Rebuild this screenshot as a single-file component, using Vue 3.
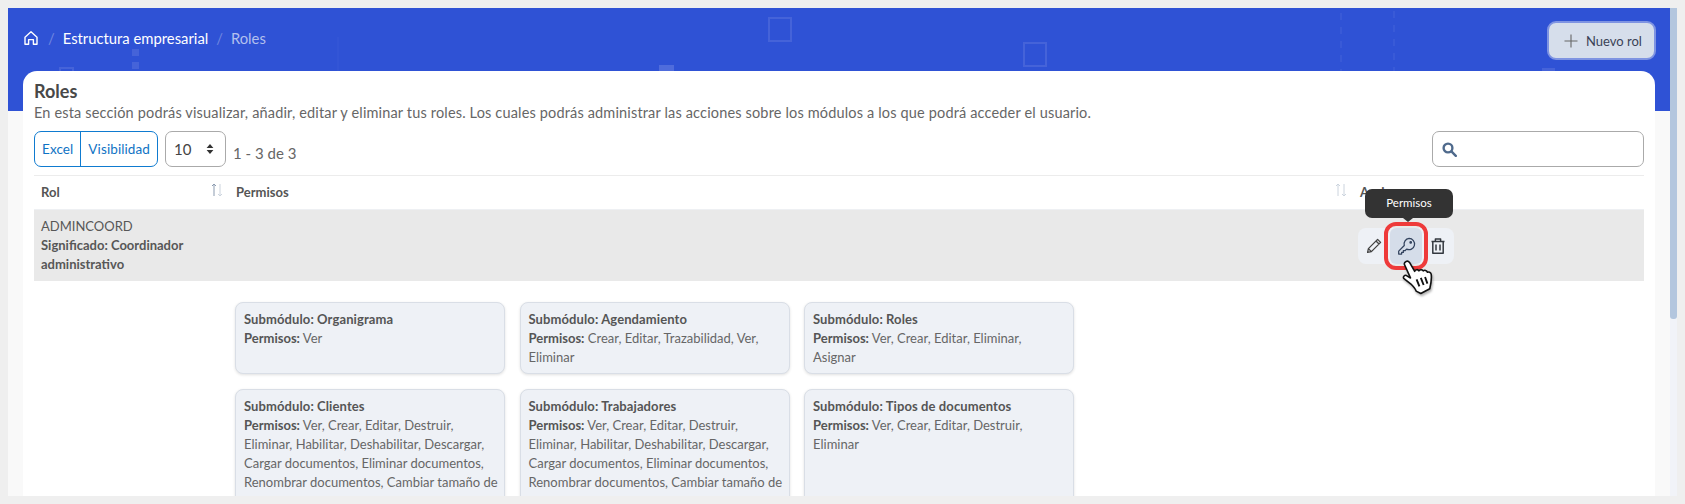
<script setup>
const long = 'Ver, Crear, Editar, Destruir, Eliminar, Habilitar, Deshabilitar, Descargar, Cargar documentos, Eliminar documentos, Renombrar documentos, Cambiar tamaño de'
const modules = [
  { name: 'Organigrama', perms: 'Ver' },
  { name: 'Agendamiento', perms: 'Crear, Editar, Trazabilidad, Ver, Eliminar' },
  { name: 'Roles', perms: 'Ver, Crear, Editar, Eliminar, Asignar' },
  { name: 'Clientes', perms: long },
  { name: 'Trabajadores', perms: long },
  { name: 'Tipos de documentos', perms: 'Ver, Crear, Editar, Destruir, Eliminar' }
]
</script>

<template>
  <div class="viewport">
    <main class="page">
      <header class="hero">
        <svg class="decor" width="1662" height="103" viewBox="0 0 1662 103" fill="none" stroke="#4563d9" stroke-width="2">
          <rect x="761" y="10" width="22" height="23" />
          <rect x="1016" y="35" width="22" height="23" />
          <rect x="52" y="60" width="13" height="20" />
          <path d="M1333 5v97M1386 3v99" stroke-dasharray="7 7" stroke-width="1" />
          <rect x="124" y="41" width="7" height="7" fill="#4563d9" stroke="none" />
          <rect x="124" y="54" width="7" height="7" fill="#4563d9" stroke="none" />
          <rect x="651" y="57" width="15" height="10" fill="#4f6cdc" stroke="none" />
          <rect x="1534" y="60" width="13" height="10" fill="#4563d9" stroke="none" />
          <path d="M330 29v40" stroke="#3859d7" stroke-width="1" />
        </svg>
        <nav class="crumbs">
          <svg class="home" width="16" height="16" viewBox="0 0 16 16" fill="none" stroke="#fff" stroke-width="1.4" stroke-linejoin="round">
            <path d="M2 7.2 8 1.8l6 5.4V14.2h-3.6V9.6H5.6v4.6H2z" />
          </svg>
          <span class="sep">/</span>
          <span class="crumb">Estructura empresarial</span>
          <span class="sep">/</span>
          <span class="crumb-current">Roles</span>
        </nav>
        <button class="new-btn">
          <svg width="16" height="16" viewBox="0 0 16 16" stroke="#666" stroke-width="1.1"><path d="M8 1.500v13M1.500 8h13" /></svg>
          Nuevo rol
        </button>
      </header>

      <section class="card">
        <h1>Roles</h1>
        <p class="desc">En esta sección podrás visualizar, añadir, editar y eliminar tus roles. Los cuales podrás administrar las acciones sobre los módulos a los que podrá acceder el usuario.</p>

        <div class="tools">
          <div class="btn-group">
            <span class="excel">Excel</span>
            <span class="vis">Visibilidad</span>
          </div>
          <div class="select">
            <span>10</span>
            <svg width="8" height="12" viewBox="0 0 8 12" fill="#333"><path d="M4 1 7.400 5H.6zM4 11 .6 7h6.800z" /></svg>
          </div>
          <span class="count">1 - 3 de 3</span>
          <div class="search">
            <svg width="15" height="15" viewBox="0 0 15 15" fill="none" stroke="#4f6a8c" stroke-width="2.400"><circle cx="6" cy="6" r="4.400" /><path d="m9.400 9.400 4.400 4.400" stroke-linecap="round" /></svg>
          </div>
        </div>

        <div class="thead">
          <div class="th th-rol">
            <span>Rol</span>
            <svg class="sort" width="12" height="14" viewBox="0 0 12 14" fill="none" stroke-width="1"><path d="M3 13V1M1 3l2-2 2 2" stroke="#8b9bb0" /><path d="M9 1v12M7 11l2 2 2-2" stroke="#ccd4de" /></svg>
          </div>
          <div class="th th-perm">
            <span>Permisos</span>
            <svg class="sort" width="12" height="14" viewBox="0 0 12 14" fill="none" stroke-width="1"><path d="M3 13V1M1 3l2-2 2 2" stroke="#ccd4de" /><path d="M9 1v12M7 11l2 2 2-2" stroke="#ccd4de" /></svg>
          </div>
          <div class="th th-act">Acciones</div>
        </div>

        <div class="row">
          <div class="role">
            <div>ADMINCOORD</div>
            <strong>Significado: Coordinador administrativo</strong>
          </div>
          <div class="actions">
            <span class="act">
              <svg width="18" height="18" viewBox="0 0 18 18" fill="none" stroke="#444" stroke-width="1.300" stroke-linejoin="round"><path d="M2.600 15.400 3.400 11.600 12.600 2.400 15.600 5.400 6.400 14.600zM11 4l3 3M3.400 11.600l3 3" /></svg>
            </span>
            <span class="act act-on">
              <svg width="19" height="19" viewBox="0 0 18 18" fill="none" stroke="#33435e" stroke-width="1.200" stroke-linejoin="round"><path d="M11.400 1.400a5.300 5.300 0 1 1-2.300 10.100L7.600 13H6v1.600H4.400V16.200H1.600v-2.800l5.300-5.300A5.300 5.300 0 0 1 11.400 1.400z" /><circle cx="13" cy="5.200" r=".7" fill="#33435e" /></svg>
            </span>
            <span class="act">
              <svg width="18" height="18" viewBox="0 0 18 18" fill="none" stroke="#33383f" stroke-width="1.500" stroke-linejoin="round"><path d="M2.500 4.400h13M6.400 4.200V2h5.200v2.200M3.800 4.600v11.600h10.400V4.600M7 7.400v6M11 7.400v6" /></svg>
            </span>
            <div class="tooltip">Permisos</div>
            <svg class="hand" width="32" height="36" viewBox="0 0 34 38" stroke="#111" stroke-width="1.700" stroke-linejoin="round" fill="#fff">
              <path d="M2.500 5.500c-.5-3 3.500-4.500 5.500-2L13.500 13c.5-2 3.500-2.500 4.500-.5 1-1.500 3.500-1.500 4.500 0 1.500-1.200 3.800-.5 4.500 1.500 1.500-.8 3.500 0 4 2 .8 5-.2 10-1.500 15.500L20 36.500 15 34c-1-3-3-5-5.500-7.500L1.800 20.500c-1-2 1-4 3-3L9 20z" />
              <path d="M15.500 21.500l3 7.500M20 20l3 7.500M24.500 19l2.500 7" fill="none" stroke-width="2" />
            </svg>
          </div>
        </div>

        <div class="modules">
          <article v-for="m in modules" :key="m.name" class="module" :class="{ tall: m.perms === long }">
            <strong class="mod-title">Submódulo: {{ m.name }}</strong>
            <div><strong>Permisos:</strong> {{ m.perms }}</div>
          </article>
        </div>
      </section>
    </main>
    <div class="scrollbar"><div class="thumb"></div></div>
  </div>
</template>

<style>
html, body { margin: 0; background: #efefef; overflow: hidden; }
</style>

<style scoped>
.viewport {
  display: flex;
  height: 488px;
  margin: 8px 8px 8px 8px;
  font-family: "Lato", "Liberation Sans", sans-serif;
  color: #575757;
}
.page {
  width: 1662px;
  overflow: hidden;
  background: #f9f9f9;
}
.hero {
  position: relative;
  height: 103px;
  background: #2f52d5;
  display: flex;
  justify-content: space-between;
  align-items: flex-start;
  padding: 13px 14px 0 15px;
  box-sizing: border-box;
}
.decor { position: absolute; left: 0; top: 0; }
.crumbs {
  position: relative;
  display: flex;
  align-items: center;
  gap: 7px;
  height: 30px;
  font-size: 14.800px;
  margin-top: 2px;
}
.home { margin-right: 1px; }
.sep { color: #6f86e0; margin: 0 1px; }
.crumb { color: #fff; }
.crumb-current { color: #b3c0ee; }
.new-btn {
  position: relative;
  display: flex;
  align-items: center;
  gap: 7px;
  width: 109px;
  height: 39px;
  padding: 0 0 0 14px;
  box-sizing: border-box;
  background: #d6deeb;
  border: 2px solid #7f94e2;
  border-radius: 9px;
  color: #3a4256;
  font-family: inherit;
  font-size: 13px;
}
.card {
  position: relative;
  margin: -40px 15px 0 15px;
  height: 425px;
  padding: 10px 11px 0 11px;
  box-sizing: border-box;
  background: #fff;
  border-radius: 14px 14px 0 0;
  overflow: hidden;
}
h1 {
  margin: 0;
  font-size: 18px;
  line-height: 20px;
  font-weight: 700;
  color: #484848;
}
.desc {
  margin: 2px 0 0;
  font-size: 14.500px;
  letter-spacing: .16px;
  line-height: 20px;
  color: #666;
}
.tools {
  display: flex;
  align-items: stretch;
  height: 36px;
  margin-top: 8px;
}
.btn-group {
  display: flex;
  border: 1px solid #0f7bd0;
  border-radius: 7px;
  color: #0f73c4;
  font-size: 13.500px;
  letter-spacing: .1px;
  line-height: 34px;
}
.excel { padding: 0 7px; border-right: 1px solid #0f7bd0; }
.vis { padding: 0 7px; }
.select {
  display: flex;
  align-items: center;
  justify-content: space-between;
  width: 61px;
  margin-left: 7px;
  padding: 0 11px 0 8px;
  box-sizing: border-box;
  border: 1px solid #aaa;
  border-radius: 7px;
  font-size: 15px;
  color: #444;
}
.count {
  margin-left: 7px;
  padding-top: 11px;
  font-size: 15px;
  line-height: 22px;
  color: #666;
}
.search {
  display: flex;
  align-items: center;
  width: 212px;
  margin-left: auto;
  padding-left: 9px;
  box-sizing: border-box;
  border: 1px solid #aaa;
  border-radius: 7px;
}
.thead {
  display: grid;
  grid-template-columns: 202px 1124px 1fr;
  height: 33px;
  margin-top: 8px;
  border-top: 1px solid #ececec;
  border-bottom: 1px solid #eef0f3;
  font-size: 13px;
  font-weight: 700;
  color: #555;
}
.th {
  display: flex;
  align-items: center;
  justify-content: space-between;
  padding: 0 13px 2px 7px;
}
.th-perm { padding-left: 0; }
.sort { margin-bottom: 4px; }
.th-act { padding-left: 0; justify-content: flex-start; }
.row {
  display: flex;
  justify-content: space-between;
  height: 71px;
  background: #e9e9e9;
  font-size: 13px;
  line-height: 19px;
}
.role {
  width: 175px;
  padding: 7px 0 0 7px;
}
.actions {
  position: relative;
  display: flex;
  align-self: flex-start;
  height: 36px;
  margin: 18px 190px 0 0;
  background: #eef1f6;
  border-radius: 8px;
}
.act {
  display: flex;
  align-items: center;
  justify-content: center;
  width: 32px;
  height: 36px;
  box-sizing: border-box;
}
.act-on {
  background: #d5dde9;
  outline: 4px solid #ee3a3a;
  outline-offset: 2px;
  border-radius: 6px;
}
.tooltip {
  position: absolute;
  left: 7px;
  top: -39px;
  width: 88px;
  height: 29px;
  background: #333;
  border-radius: 7px;
  color: #fff;
  font-size: 11.500px;
  line-height: 27px;
  text-align: center;
}
.tooltip::after {
  content: "";
  position: absolute;
  left: 38px;
  bottom: -4px;
  border-left: 5px solid transparent;
  border-right: 5px solid transparent;
  border-top: 4px solid #333;
}
.hand {
  position: absolute;
  left: 44px;
  top: 31px;
  filter: drop-shadow(1px 2px 1px rgba(0,0,0,.3));
}
.modules {
  display: grid;
  grid-template-columns: repeat(3, 270px);
  grid-auto-rows: minmax(72px, auto);
  column-gap: 14.500px;
  row-gap: 15px;
  margin: 21px 0 0 201px;
  font-size: 13px;
  line-height: 19px;
}
.module {
  padding: 7px 8px 6px 8px;
  box-sizing: border-box;
  background: #eef1f6;
  border: 1px solid #d9dee6;
  border-radius: 8px;
  box-shadow: 0 1px 3px rgba(0,0,0,.12);
  color: #666;
}
.tall { min-height: 140px; padding-right: 3px; }
.module strong { color: #555; }
.mod-title { display: block; letter-spacing: .1px; }
.scrollbar {
  width: 7px;
  background: #f1f3f8;
}
.thumb {
  height: 311px;
  background: #b3c6de;
  border-radius: 0 0 3px 3px;
}
</style>
